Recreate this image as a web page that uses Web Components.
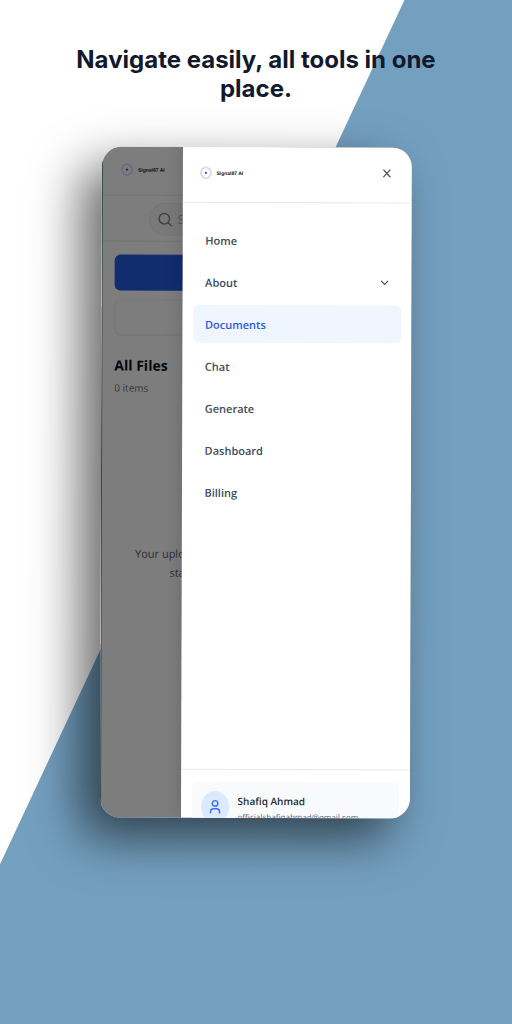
<!DOCTYPE html>
<html lang="en">
<head>
<meta charset="utf-8">
<meta name="viewport" content="width=device-width, initial-scale=1">
<title>Signal87 AI</title>
<style>
html, body { margin: 0; min-height: 100%; }
body { font-family: "Open Sans", "Noto Sans", sans-serif; color: #414b5a; background: #fff; }
</style>
</head>
<body>
<promo-page>
  <span slot="title">Navigate easily, all tools in one place.</span>
  <phone-frame>
    <files-screen></files-screen>
    <nav-drawer slot="drawer">
      <nav-item>Home</nav-item>
      <nav-item expandable>About</nav-item>
      <nav-item active>Documents</nav-item>
      <nav-item>Chat</nav-item>
      <nav-item>Generate</nav-item>
      <nav-item>Dashboard</nav-item>
      <nav-item>Billing</nav-item>
      <user-card slot="footer"><span slot="name">Shafiq Ahmad</span><span slot="email">officialshafiqahmad@gmail.com</span></user-card>
    </nav-drawer>
  </phone-frame>
</promo-page>
<script>
class BaseElement extends HTMLElement {
  constructor() {
    super();
    this.attachShadow({ mode: 'open' }).innerHTML =
      '<style>*{box-sizing:border-box}' + this.constructor.css + '</style>' + this.constructor.html;
  }
}

class PromoPage extends BaseElement {
  static css = `
    :host { display: flex; flex-direction: column; align-items: center; min-height: 100vh;
      box-sizing: border-box; padding: 45px 0 64px; position: relative; isolation: isolate; overflow: hidden; }
    :host::before { content: ""; position: absolute; inset: 0; z-index: -1; background: #74a0c0;
      clip-path: polygon(79% 0, 100% 0, 100% 100%, 0 100%, 0 84.4%); }
    h1 { margin: 0 0 44px; width: 76%; text-align: center; color: #111a2c;
      font: 700 24px/29px Inter, sans-serif; }
    ::slotted(phone-frame) { width: 60.5%; }`;
  static html = `<h1><slot name="title"></slot></h1><slot></slot>`;
}

class PhoneFrame extends BaseElement {
  static css = `
    :host { display: block; aspect-ratio: 309 / 669; transform: rotate(0.17deg); border-radius: 20px;
      box-shadow: -20px 20px 50px rgba(0,0,0,.6); }
    .screen { position: relative; height: 100%; border-radius: 20px; overflow: hidden; background: #fff; }
    .shade { position: absolute; inset: 0; background: rgba(0,0,0,.5); box-shadow: inset 1px 0 #3a4644; }
    .drawer { position: absolute; inset: 0 0 0 26%; box-shadow: -2px 0 16px rgba(0,0,0,.14); }`;
  static html = `<div class="screen"><slot></slot><div class="shade"></div><div class="drawer"><slot name="drawer"></slot></div></div>`;
}

class BrandLogo extends BaseElement {
  static css = `
    :host { display: flex; align-items: center; gap: 4px; color: #10131c; font: 700 5px/8px "Liberation Sans", sans-serif; }
    svg { width: 14px; height: 14px; }`;
  static html = `<svg viewBox="0 0 14 14" fill="none"><ellipse cx="7" cy="7" rx="5" ry="5.5" stroke="#e0ddfc" stroke-width="1.8"/><ellipse cx="7" cy="7" rx="4.8" ry="5.2" stroke="#cdc9f8" stroke-width=".6"/><circle cx="7" cy="7" r="1.2" fill="#5548e8"/></svg><span>Signal87 AI</span>`;
}

class FilesScreen extends BaseElement {
  static css = `
    :host { display: block; height: 100%; background: #fafafa; }
    header { height: 49px; padding: 16px 18px; border-bottom: 1px solid #e5e7ea; }
    .search { height: 46px; padding: 7px 0 0 47px; border-bottom: 1px solid #e5e7ea; }
    label { display: flex; align-items: center; gap: 5px; height: 33px; padding-left: 8px;
      border: 1px solid #e5e7ea; border-right: 0; border-radius: 17px 0 0 17px; background: #f2f3f5; }
    label svg { width: 15px; height: 15px; flex: none; }
    input { flex: 1; min-width: 0; border: 0; padding: 0; background: none; font: 12px "Open Sans", sans-serif; }
    input::placeholder { color: #9ca3af; }
    main { padding: 13px; }
    button { display: block; width: 100%; height: 36px; margin: 0 0 9px; border: 1px solid #e5e7ea; border-radius: 6px; background: none; }
    button.primary { border-color: #2458e0; background: #2458e0; }
    h2 { margin: 18px 0 0; color: #0b0d12; font-size: 14px; line-height: 24px; font-weight: 700; }
    .count { margin: 0; color: #6b7280; font-size: 10px; line-height: 20px; }
    .empty { width: 71px; margin: 146px 0 0; text-align: right; color: #565d68; font-size: 11px; line-height: 19px; white-space: nowrap; }`;
  static html = `
    <header><brand-logo></brand-logo></header>
    <div class="search"><label><svg viewBox="0 0 15 15" fill="none" stroke="#80858f" stroke-width="1.5" stroke-linecap="round"><circle cx="6.5" cy="7" r="5.2"/><path d="M10.5 11l3 3"/></svg><input type="search" placeholder="S" aria-label="Search"></label></div>
    <main><button class="primary" aria-label="Upload"></button><button aria-label="New folder"></button>
    <h2>All Files</h2><p class="count">0 items</p><p class="empty">Your uplo<br>sta</p></main>`;
}

class NavDrawer extends BaseElement {
  static css = `
    :host { display: flex; flex-direction: column; height: 100%; background: #fff; }
    header { display: flex; justify-content: space-between; align-items: flex-start; height: 56px; flex: none;
      padding: 19px 18px 0 16px; border-bottom: 1px solid #e8e9eb; }
    header button { display: flex; border: 0; padding: 0; background: none; }
    header svg { width: 14px; height: 14px; }
    nav { flex: 1; display: flex; flex-direction: column; gap: 4px; padding: 18px 10px 0 11px; }
    footer { height: 49px; flex: none; overflow: hidden; padding: 12px 11px 0; border-top: 1px solid #e8e9eb; }`;
  static html = `
    <header><brand-logo></brand-logo><button aria-label="Close menu"><svg viewBox="0 0 14 14" fill="none" stroke="#4b5563" stroke-width="1.3"><path d="M3.5 3.2l7 7.6M10.5 3.2l-7 7.6"/></svg></button></header>
    <nav><slot></slot></nav><footer><slot name="footer"></slot></footer>`;
}

class NavItem extends BaseElement {
  static css = `
    :host { display: block; }
    a { display: flex; align-items: center; justify-content: space-between; height: 38px; padding: 0 12px;
      border-radius: 6px; color: #414b5a; text-decoration: none; font-size: 11px; font-weight: 600; }
    svg { display: none; width: 10px; height: 10px; }
    :host([active]) a { background: #eff6ff; color: #3159dc; }
    :host([expandable]) svg { display: block; }`;
  static html = `<a href="#"><slot></slot><svg viewBox="0 0 10 10" fill="none" stroke="#4b5563" stroke-width="1.3"><path d="M1.5 3.5L5 7l3.5-3.5"/></svg></a>`;
}

class UserCard extends BaseElement {
  static css = `
    :host { display: flex; gap: 9px; padding: 9px; height: 54px; border-radius: 6px; background: #f9fafb; box-sizing: border-box; }
    .avatar { display: grid; place-items: center; flex: none; width: 28px; height: 32px; border-radius: 50%; background: #dbeafe; }
    .avatar svg { width: 14px; height: 16px; }
    .info { display: flex; flex-direction: column; min-width: 0; white-space: nowrap; }
    .name { color: #252d3b; font-size: 10px; line-height: 20px; font-weight: 600; }
    .email { color: #6b7280; font: 8px/12px "Noto Sans", sans-serif; }`;
  static html = `<span class="avatar"><svg viewBox="0 0 14 16" fill="none" stroke="#3b6ef0" stroke-width="1.4" stroke-linecap="round"><circle cx="7" cy="4.5" r="2.8"/><path d="M2.5 14v-1.2a3 3 0 0 1 3-3h3a3 3 0 0 1 3 3V14"/></svg></span>
    <div class="info"><span class="name"><slot name="name"></slot></span><span class="email"><slot name="email"></slot></span></div>`;
}

customElements.define('brand-logo', BrandLogo);
customElements.define('files-screen', FilesScreen);
customElements.define('nav-item', NavItem);
customElements.define('user-card', UserCard);
customElements.define('nav-drawer', NavDrawer);
customElements.define('phone-frame', PhoneFrame);
customElements.define('promo-page', PromoPage);
</script>
</body>
</html>
